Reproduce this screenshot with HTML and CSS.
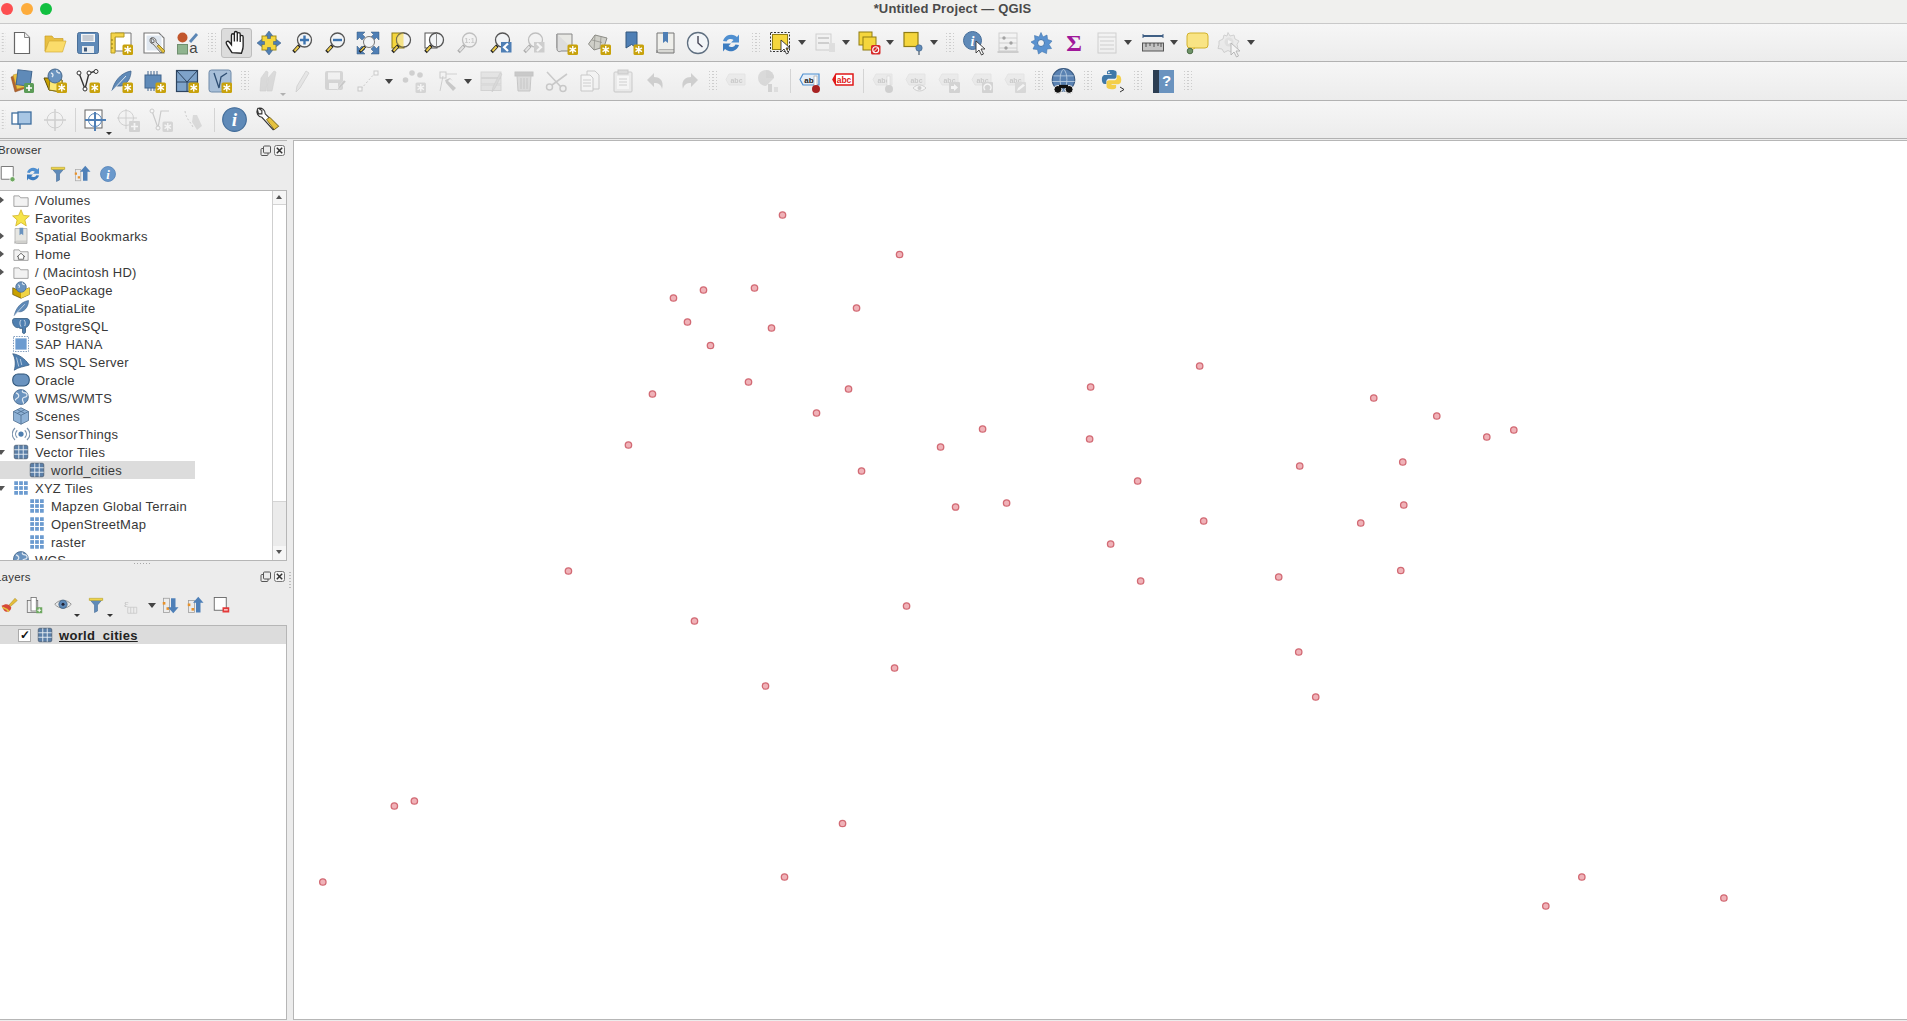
FILE: index.html
```html
<!DOCTYPE html>
<html lang="en">
<head>
<meta charset="utf-8">
<title>*Untitled Project — QGIS</title>
<link rel="stylesheet" href="styles.css">
</head>
<body>
<svg class="defs" aria-hidden="true">
<defs>
<g id="bd"><rect x="13.5" y="13.5" width="10.5" height="10.5" rx="1.5" fill="#c8a20c"/><path d="M18.75 15v7.5M15.5 16.9l6.5 3.7M22 16.9l-6.5 3.7" stroke="#fff" stroke-width="1.4"/></g>
<g id="mag"><path d="M9.5 14.5 3.5 21" stroke="#222" stroke-width="3.4"/><path d="M8.5 15.5 4.5 20" stroke="#e8c84a" stroke-width="2"/><circle cx="14.5" cy="9" r="7" fill="#f2f4f6" stroke="#555" stroke-width="1.3"/></g>
<g id="cur"><path d="M0 0v12l3-3 2.5 5 2-1-2.5-5h4z" fill="#fff" stroke="#333" stroke-width=".9"/></g>
<g id="grid"><rect x="3" y="3" width="18" height="18" rx="2" fill="#5b7fa8" stroke="#44566b"/><path d="M9 3v18M15 3v18M3 9h18M3 15h18" stroke="#e8eef4" stroke-width="1.2"/></g>
<g id="gridl" fill="#6b9bd0"><rect x="3" y="3" width="5" height="5"/><rect x="9.5" y="3" width="5" height="5"/><rect x="16" y="3" width="5" height="5"/><rect x="3" y="9.5" width="5" height="5"/><rect x="9.5" y="9.5" width="5" height="5"/><rect x="16" y="9.5" width="5" height="5"/><rect x="3" y="16" width="5" height="5"/><rect x="9.5" y="16" width="5" height="5"/><rect x="16" y="16" width="5" height="5"/></g>
<g id="fold"><path d="M2.5 6.500h7l2 2.500h10v11.500h-19z" fill="#f2f2f2" stroke="#8a8a8a" stroke-width="1"/></g>
<g id="globe"><circle cx="12" cy="11" r="9" fill="#6a93bf" stroke="#47688c"/><path d="M6 6c3 1 4 3 3 5s-3 1-4 4M14 3c-1 2 1 3 3 3s3 2 2 4-4 0-5 3 2 4 1 6" fill="none" stroke="#dfe8f1" stroke-width="1.5"/></g>
<g id="feath"><path d="M3 22C5 13 11 4 22 2c0 6-3 13-10 15l-5 0z" fill="#5f8ab8" stroke="#40658e" stroke-width=".8"/><path d="M3 22 17 7" stroke="#dfe8f1"/></g>
<g id="refr"><path d="M4 10a8.500 8.500 0 0 1 14-4l2-2.500v8h-8l2.500-2.500a4.500 4.500 0 0 0-7 1.500z" fill="#4f8fd0"/><path d="M20 14a8.500 8.500 0 0 1-14 4l-2 2.500v-8h8l-2.500 2.500a4.500 4.500 0 0 0 7-1.500z" fill="#3c7cc0"/></g>
<g id="tag"><path d="M5 5h16v11H5l-3-5.500z" fill="#dcdcd2" stroke="#c8c8bc"/><text x="12.500" y="13.500" class="st">abc</text></g>
<g id="funnel"><path d="M3 4h18l-7 8v8l-4 2V12z" fill="#5f8ab8" stroke="#456d99" stroke-width=".8"/><path d="M3 3h18v3H3z" fill="#f0d44a" stroke="#b89f20" stroke-width=".6"/></g>
<g id="dfloat"><rect x="1" y="3.500" width="7" height="7" rx="1" fill="none" stroke="#555"/><rect x="3.500" y="1" width="7" height="7" rx="1" fill="#ececec" stroke="#555"/></g>
<g id="dclose"><rect x=".5" y=".5" width="10" height="10" rx="2" fill="#f4f4f4" stroke="#777"/><path d="m2.800 2.800 5.400 5.400M8.200 2.800 2.800 8.200" stroke="#333" stroke-width="1.500"/></g>
</defs>
</svg>

<header class="title">
  <div class="lights"><span class="l red"></span><span class="l org"></span><span class="l grn"></span></div>
  <div class="title-text">*Untitled Project — QGIS</div>
</header>

<div class="tb">
  <span class="grip g1"></span>
  <span class="b"><svg class="i" viewBox="0 0 24 24"><path d="M4.500 1.500h10l5 5v16h-15z" fill="#fff" stroke="#666" stroke-width="1.200"/><path d="M14.500 1.500v5h5" fill="#eee" stroke="#888"/></svg></span>
  <span class="b"><svg class="i" viewBox="0 0 24 24"><path d="M2 20V5h7l2 2.500h9V11H6z" fill="#e8bf40" stroke="#c89e28" stroke-width=".7"/><path d="M2 21 6 10h17l-3.500 11z" fill="#fbdc6a" stroke="#d4ae38" stroke-width=".7"/></svg></span>
  <span class="b"><svg class="i" viewBox="0 0 24 24"><rect x="1.500" y="1.500" width="21" height="21" rx="2" fill="#5f8ab8" stroke="#4a6f98"/><rect x="5" y="3" width="14" height="8" fill="#f3f5f7"/><path d="M6.500 5h11M6.500 7h11M6.500 9h11" stroke="#7d8c9c" stroke-width=".8"/><rect x="6" y="15" width="12" height="7" fill="#e8ecef"/><rect x="8" y="16.500" width="3" height="4" fill="#40597a"/></svg></span>
  <span class="b"><svg class="i" viewBox="0 0 24 24"><path d="M6 2h16v18H6z" fill="#fff" stroke="#777"/><path d="M2 2h13v4H6v16H2z" fill="#f4d44a" stroke="#b59a20"/><path d="M2 9h2M2 13h2M2 17h2" stroke="#8c7714"/><use href="#bd"/></svg></span>
  <span class="b"><svg class="i" viewBox="0 0 24 24"><path d="M2 2h15l5 5v15H2z" fill="#fff" stroke="#777" stroke-width="1.100"/><rect x="4.500" y="4.500" width="15" height="15" fill="#dfe7f0"/><path d="M9 7a3.500 3.500 0 0 0 2 6l8 9 3-3-8-8a3.500 3.500 0 0 0-5-4l3 2v2.500H9.500z" fill="#ddd" stroke="#555" stroke-width=".8"/><path d="m15 15 6 7 2-2-6-6z" fill="#e5c23f" stroke="#8b7614" stroke-width=".7"/></svg></span>
  <span class="b"><svg class="i" viewBox="0 0 24 24"><circle cx="7.500" cy="6.500" r="5" fill="#c2562c"/><path d="m15 11 7-8" stroke="#5b86b5" stroke-width="2.800"/><rect x="2.500" y="13.500" width="10" height="9.500" fill="#8fb48f" stroke="#6f8f6f"/><text x="18.500" y="22" class="a">a</text></svg></span>
  <span class="grip g16"></span>
  <span class="b on"><svg class="i big" viewBox="0 0 24 24"><path d="M8 21C6 18 4 15 3 13c-.8-1.800 1.500-3 2.800-1.200L7.500 14V5.500a1.300 1.300 0 0 1 2.600 0V11 3.500a1.300 1.300 0 0 1 2.600 0V11 4.500a1.300 1.300 0 0 1 2.600 0V11.500 7a1.300 1.300 0 0 1 2.600 0v8c0 3-1 4.500-1.500 6.500z" fill="#fff" stroke="#222" stroke-width="1.200"/></svg></span>
  <span class="b"><svg class="i" viewBox="0 0 24 24"><rect x="5" y="5" width="14" height="14" fill="#f5d63d" stroke="#a48d18"/><path d="M12 0l3.500 4.500h-2v3h-3v-3h-2zM12 24l3.500-4.500h-2v-3h-3v3h-2zM0 12l4.500-3.500v2h3v3h-3v2zM24 12l-4.500-3.500v2h-3v3h3v2z" fill="#4f7fb5" stroke="#34597f" stroke-width=".5"/></svg></span>
  <span class="b"><svg class="i" viewBox="0 0 24 24"><use href="#mag"/><path d="M14.500 4.500v9M10 9h9" stroke="#3d74b0" stroke-width="2.400"/></svg></span>
  <span class="b"><svg class="i" viewBox="0 0 24 24"><use href="#mag"/><path d="M10 9h9" stroke="#3d74b0" stroke-width="2.400"/></svg></span>
  <span class="b"><svg class="i" viewBox="0 0 24 24"><path d="M1 1h8L6.500 3.500 9 6 6 9 3.500 6.500 1 9zM23 1h-8l2.500 2.500L15 6l3 3 2.500-2.500L23 9zM23 23h-8l2.500-2.500L15 18l3-3 2.500 2.500L23 15zM1 23h8l-2.500-2.500L9 18l-3-3-2.500 2.500L1 15z" fill="#4f7fb5" stroke="#34597f" stroke-width=".5"/><path d="M9.500 15 3.500 21" stroke="#222" stroke-width="2.600"/><path d="M8.500 16 4.500 20" stroke="#e8c84a" stroke-width="1.400"/><circle cx="13" cy="11" r="5.500" fill="#f2f4f6" stroke="#777"/></svg></span>
  <span class="b"><svg class="i" viewBox="0 0 24 24"><rect x="3" y="2" width="12" height="15" fill="#f5d63d" stroke="#8f7c14"/><use href="#mag" /><path d="M14.500 2a7 7 0 0 0 0 14z" fill="#f5d63d" opacity=".6"/></svg></span>
  <span class="b"><svg class="i" viewBox="0 0 24 24"><rect x="3" y="2" width="12" height="15" fill="#fff" stroke="#555"/><use href="#mag"/><path d="M14.500 2v14" stroke="#888"/></svg></span>
  <span class="b off"><svg class="i" viewBox="0 0 24 24"><use href="#mag"/><text x="14.500" y="12" class="st">1:1</text></svg></span>
  <span class="b"><svg class="i" viewBox="0 0 24 24"><use href="#mag"/><rect x="13" y="11" width="10.500" height="10.500" fill="#4f7fb5"/><path d="m20 12.500-4 3.700 4 3.800" fill="none" stroke="#fff" stroke-width="2.200"/></svg></span>
  <span class="b off"><svg class="i" viewBox="0 0 24 24"><use href="#mag"/><rect x="13" y="11" width="10.500" height="10.500" fill="#888"/><path d="m16 12.500 4 3.700-4 3.800" fill="none" stroke="#fff" stroke-width="2.200"/></svg></span>
  <span class="b"><svg class="i" viewBox="0 0 24 24"><path d="M3 3h15v14H3z" fill="#e8e8e4" stroke="#888"/><path d="M3 3v15c0 3 3 3 4 2h11v-3" fill="#ddd" stroke="#888"/><use href="#bd"/></svg></span>
  <span class="b"><svg class="i" viewBox="0 0 24 24"><path d="M1.500 13 8 4l12 3-3 9-10 3z" fill="#cfcfc8" stroke="#8c8c86"/><path d="M5 9l10 2.500M8 4l-1 15M14 6l-1 11" stroke="#8c8c86" stroke-width=".7"/><use href="#bd"/></svg></span>
  <span class="b"><svg class="i" viewBox="0 0 24 24"><path d="M6 1h11v16l-5.500-3.500L6 17z" fill="#4f7fb5" stroke="#34597f"/><use href="#bd"/></svg></span>
  <span class="b"><svg class="i" viewBox="0 0 24 24"><path d="M4 2h17v17H7c-2 0-3 1-3 3z" fill="#efefeb" stroke="#777"/><path d="M4 19c0 2 1 3 3 3h14v-3" fill="#d8d8d4" stroke="#777"/><path d="M10 1h5v11l-2.500-2-2.500 2z" fill="#4f7fb5"/></svg></span>
  <span class="b"><svg class="i" viewBox="0 0 24 24"><circle cx="12" cy="12" r="10.500" fill="#f2f5f8" stroke="#5f6f80" stroke-width="1.300"/><path d="M12 5v7l4.500 4" fill="none" stroke="#445" stroke-width="1.400"/></svg></span>
  <span class="b"><svg class="i" viewBox="0 0 24 24"><use href="#refr"/></svg></span>
  <span class="grip g17"></span>
  <span class="b"><svg class="i" viewBox="0 0 24 24"><rect x="1.500" y="1.500" width="19" height="19" fill="none" stroke="#333" stroke-dasharray="2 1.500"/><rect x="3.500" y="3.500" width="15" height="15" fill="#f5d63d" stroke="#8f7c14"/><use href="#cur" x="12" y="9"/></svg></span><span class="ar"></span>
  <span class="b off"><svg class="i" viewBox="0 0 24 24"><rect x="3" y="3" width="15" height="16" fill="#f0f0ea" stroke="#888"/><path d="M5 7h11M5 12h11" stroke="#888" stroke-width="2"/><rect x="16" y="12" width="6" height="9" fill="#bbb"/></svg></span><span class="ar"></span>
  <span class="b"><svg class="i" viewBox="0 0 24 24"><rect x="2" y="1" width="13" height="13" fill="#f5d63d" stroke="#8f7c14"/><rect x="6" y="6" width="13" height="13" fill="#f5d63d" stroke="#8f7c14"/><rect x="14" y="14" width="9.500" height="9.500" rx="1.500" fill="#d62828"/><circle cx="18.750" cy="18.750" r="3" fill="none" stroke="#fff" stroke-width="1.100"/><path d="m16.500 21 4.500-4.500" stroke="#fff"/></svg></span><span class="ar"></span>
  <span class="b"><svg class="i" viewBox="0 0 24 24"><rect x="3" y="1.500" width="14" height="14" fill="#f5d63d" stroke="#8f7c14" stroke-width="1.200"/><circle cx="18" cy="17" r="3.200" fill="#5f8ab8" stroke="#3f6084" stroke-width=".6"/><path d="M18 20v4" stroke="#5f6f80" stroke-width="1.400"/></svg></span><span class="ar"></span>
  <span class="grip g18"></span>
  <span class="b"><svg class="i" viewBox="0 0 24 24"><circle cx="9.500" cy="9.500" r="9" fill="#5f8ab8" stroke="#456d99"/><text x="9.500" y="14.500" class="inf">i</text><use href="#cur" x="13" y="10"/></svg></span>
  <span class="b off"><svg class="i" viewBox="0 0 24 24"><rect x="3" y="2" width="18" height="18" fill="none" stroke="#888"/><path d="M3 7h18M3 12h18M3 17h18" stroke="#888"/><circle cx="8" cy="7" r="1.700"/><circle cx="15" cy="12" r="1.700"/><circle cx="10" cy="17" r="1.700"/><rect x="1.500" y="20" width="21" height="2" fill="#888"/></svg></span>
  <span class="b"><svg class="i" viewBox="0 0 24 24"><path d="M12 1.500 14 6l4-2 .5 4.500L23 10l-3 3.500 2.500 4-4.500.5-.5 4.500-4.500-2-3.500 2.500-1-4.500-4.500-.5L6 14 2 11l4-2-.5-4.500L10 6z" fill="#5a92d0" stroke="#3f74ad" stroke-width=".6"/><circle cx="12" cy="12" r="3.500" fill="#f0f0f0" stroke="#3f74ad"/></svg></span>
  <span class="b"><svg class="i" viewBox="0 0 24 24"><text x="12" y="20" class="sig">Σ</text></svg></span>
  <span class="b off"><svg class="i" viewBox="0 0 24 24"><rect x="3" y="2" width="18" height="20" fill="#f2f2ec" stroke="#888"/><path d="M3 6h18M5 10h14M5 14h14M5 18h14" stroke="#888"/></svg></span><span class="ar w"></span>
  <span class="b"><svg class="i" viewBox="0 0 24 24"><path d="M2 5h20" stroke="#3f5f84" stroke-width="2"/><path d="M2 3v4M22 3v4" stroke="#3f5f84"/><rect x="1.500" y="12" width="21" height="8" fill="#c4c4c4" stroke="#555"/><path d="M5 12v4M9 12v3M13 12v4M17 12v3M20 12v4" stroke="#333" stroke-width=".8"/></svg></span><span class="ar"></span>
  <span class="b"><svg class="i" viewBox="0 0 24 24"><rect x="2" y="2" width="21" height="15" rx="3" fill="#f9e484" stroke="#d2b22c"/><path d="M5 17v3l5-3" fill="#f9e484" stroke="#d2b22c"/><circle cx="5" cy="20" r="2.800" fill="#6f9468" stroke="#4d6d48"/></svg></span>
  <span class="b off"><svg class="i" viewBox="0 0 24 24"><path d="M10 1.500 12 5l4-1 1 4 4 2-2 3.500 1 4-4 .5-2 3.500-4-2-4 2-2-3.500-4-.5 1-4L1 10l4-2 1-4 3 1z" fill="#ddd" stroke="#888"/><circle cx="11" cy="11" r="4.500" fill="#bbb"/><path d="m10 9 4 2-4 2z" fill="#fff"/><use href="#cur" x="13" y="12"/></svg></span><span class="ar"></span>
</div>

<div class="tb t2">
  <span class="grip g1"></span>
  <span class="b"><svg class="i" viewBox="0 0 24 24"><path d="M1 8l11-4 4 15-11 4z" fill="#b4642c" stroke="#8a4a1e" stroke-width=".5"/><path d="M3 6l11-3 4 14-11 3z" fill="#edc23e" stroke="#b3922c" stroke-width=".5"/><rect x="7" y="1.500" width="14" height="15" transform="rotate(7 14 9)" fill="#5f8ab8" stroke="#40658e"/><rect x="14" y="14" width="10" height="10" rx="1.500" fill="#5c9c58"/><path d="M19 16v6M16 19h6" stroke="#fff" stroke-width="1.700"/></svg></span>
  <span class="b"><svg class="i" viewBox="0 0 24 24"><path d="M1 9l5 12 13 2V11L7 9z" fill="#c9a100" stroke="#5a4d10"/><path d="M7 9l12 2v12L6 21z" fill="#fbe878" stroke="#8c7714"/><circle cx="12" cy="7" r="7" fill="#6a93bf" stroke="#47688c"/><path d="M8 4c3 1 2 3 1 4m5-7c-1 2 1 3 3 3" stroke="#dfe8f1" fill="none" stroke-width="1.400"/><use href="#bd"/></svg></span>
  <span class="b"><svg class="i" viewBox="0 0 24 24"><path d="M3 4l6 16 4-16 7-2" fill="none" stroke="#333" stroke-width="1.400"/><circle cx="3" cy="4" r="2" fill="#fff" stroke="#333"/><circle cx="9" cy="20" r="2" fill="#fff" stroke="#333"/><circle cx="13" cy="4" r="2" fill="#fff" stroke="#333"/><circle cx="20" cy="2.500" r="2" fill="#fff" stroke="#333"/><use href="#bd"/></svg></span>
  <span class="b"><svg class="i" viewBox="0 0 24 24"><use href="#feath"/><use href="#bd"/></svg></span>
  <span class="b"><svg class="i" viewBox="0 0 24 24"><rect x="3" y="6" width="16" height="13" fill="#5f8ab8" stroke="#40658e"/><path d="M6 2v4M9 2v4M12 2v4M15 2v4M6 19v3M9 19v3M12 19v3" stroke="#40658e"/><use href="#bd"/></svg></span>
  <span class="b"><svg class="i" viewBox="0 0 24 24"><rect x="1.500" y="1.500" width="21" height="21" fill="#7ea3ca" stroke="#2d4460" stroke-width="1.200"/><path d="M1.500 13h21M12 13v10M1.500 1.500 12 13l10.500-11.500" stroke="#2d4460" fill="none"/><use href="#bd"/></svg></span>
  <span class="b"><svg class="i" viewBox="0 0 24 24"><rect x="1" y="1" width="22" height="22" rx="2.500" fill="#a8bfd8" stroke="#6f8aa8"/><path d="M6 4l5 15 2-11 6-4" fill="none" stroke="#2f4f73" stroke-width="1.300"/><use href="#bd"/></svg></span>
  <span class="grip g16"></span>
  <span class="b off sm-a"><svg class="i" viewBox="0 0 24 24"><path d="M3 22 4 9l5-7 2 1-2 19zM10 22l1-13 6-7 2 1-4 19z" fill="#aaa" stroke="#888" stroke-width=".6"/></svg></span>
  <span class="b off"><svg class="i" viewBox="0 0 24 24"><path d="M6 23l1-6L16 2l3 2-9 15z" fill="#ccc" stroke="#888" stroke-width=".8"/></svg></span>
  <span class="b off"><svg class="i" viewBox="0 0 24 24"><rect x="2" y="2" width="18" height="19" rx="2" fill="#999"/><rect x="5" y="3.500" width="12" height="7" fill="#eee"/><rect x="6" y="14" width="9" height="6" fill="#eee"/><path d="M14 22l2-5 5-6 2 1.500-5 6z" fill="#777" stroke="#fff" stroke-width=".4"/></svg></span>
  <span class="b off"><svg class="i" viewBox="0 0 24 24"><path d="M5 20 19 4" stroke="#777" stroke-dasharray="2 2"/><rect x="2" y="18" width="4" height="4" fill="#fff" stroke="#777"/><rect x="18" y="2" width="4" height="4" fill="#fff" stroke="#777"/></svg></span><span class="ar w"></span>
  <span class="b off"><svg class="i" viewBox="0 0 24 24"><circle cx="3.500" cy="11" r="2.800" fill="#888"/><circle cx="10" cy="4" r="2.800" fill="#888"/><circle cx="18" cy="6" r="2.800" fill="#888"/><use href="#bd"/></svg></span>
  <span class="b off"><svg class="i" viewBox="0 0 24 24"><path d="M5 22 8 7" stroke="#888"/><rect x="5" y="3" width="6" height="6" fill="none" stroke="#777"/><path d="M11 5h11" stroke="#888"/><path d="m11 14 7 8 3-3-8-7 2-2 3 2-3-3-5 2z" fill="#777"/></svg></span><span class="ar"></span>
  <span class="b off"><svg class="i" viewBox="0 0 24 24"><rect x="2" y="3" width="20" height="5.500" fill="#c8c8b0" stroke="#999"/><rect x="2" y="9.500" width="20" height="5.500" fill="#c8c8b0" stroke="#999"/><rect x="2" y="16" width="20" height="5.500" fill="#c8c8b0" stroke="#999"/><path d="m13 23 1-5 7-14 2 1-7 14z" fill="#aaa" stroke="#777" stroke-width=".5"/></svg></span>
  <span class="b off"><svg class="i" viewBox="0 0 24 24"><rect x="3" y="3" width="18" height="4" fill="#a66" stroke="#955"/><path d="M5 7h14l-1 15H6z" fill="#c9a8a8" stroke="#966"/><path d="M9 9v11M12 9v11M15 9v11" stroke="#966"/></svg></span>
  <span class="b off"><svg class="i" viewBox="0 0 24 24"><path d="M2 3l14 15M22 5 7 16" stroke="#777" stroke-width="1.600"/><circle cx="18" cy="19.500" r="3" fill="none" stroke="#777" stroke-width="1.500"/><circle cx="4.500" cy="18" r="3" fill="none" stroke="#777" stroke-width="1.500"/></svg></span>
  <span class="b off"><svg class="i" viewBox="0 0 24 24"><path d="M9 2h8l4 4v14H9z" fill="#f6f6f6" stroke="#777"/><path d="M3 6h9l3 3v13H3z" fill="#fff" stroke="#777"/><path d="M5 11h8M5 14h8M5 17h8" stroke="#888"/></svg></span>
  <span class="b off"><svg class="i" viewBox="0 0 24 24"><rect x="3" y="3" width="18" height="20" rx="1" fill="#ddd" stroke="#777"/><rect x="7" y="1" width="10" height="4" fill="#aaa" stroke="#777"/><rect x="6" y="7" width="12" height="13" fill="#fff"/><path d="M8 10h8M8 13h8M8 16h8" stroke="#888"/></svg></span>
  <span class="b off"><svg class="i" viewBox="0 0 24 24"><path d="M10 4 3 11l7 7v-4c4 0 7 1 8 6 2-7-1-12-8-12z" fill="#888"/></svg></span>
  <span class="b off"><svg class="i" viewBox="0 0 24 24"><path d="m14 4 7 7-7 7v-4c-4 0-7 1-8 6-2-7 1-12 8-12z" fill="#888"/></svg></span>
  <span class="grip g14"></span>
  <span class="b off"><svg class="i" viewBox="0 0 24 24"><use href="#tag"/></svg></span>
  <span class="b off"><svg class="i" viewBox="0 0 24 24"><path d="M9 1a8 8 0 0 1 8 8l-8 8A8 8 0 0 1 9 1z" fill="#c8a09a"/><path d="M9 1a8 8 0 0 1 8 8H9z" fill="#8ca08c"/><rect x="11" y="15" width="4" height="8" fill="#999"/><rect x="17" y="18" width="4" height="5" fill="#bbb"/></svg></span>
  <span class="vl v8"></span>
  <span class="b"><svg class="i" viewBox="0 0 24 24"><path d="M5 5h16v11H5l-3-5.500z" fill="#e4eef8" stroke="#4f8fd0" stroke-width="1.200"/><text x="11" y="13.500" class="lb">ab</text><rect x="16" y="7" width="3" height="11" fill="#fff" stroke="#888" stroke-width=".5"/><circle cx="18" cy="20" r="4" fill="#a82222"/></svg></span>
  <span class="b"><svg class="i" viewBox="0 0 24 24"><path d="M5 5h17v11H5l-3-5.500z" fill="#fff" stroke="#e01818" stroke-width="1.500"/><path d="M2 10.500 5 5v11z" fill="#e01818"/><text x="13" y="13.500" class="lr">abc</text></svg></span>
  <span class="vl v7"></span>
  <span class="b off"><svg class="i" viewBox="0 0 24 24"><use href="#tag"/><rect x="16" y="7" width="3" height="11" fill="#fff" stroke="#888" stroke-width=".5"/><circle cx="18" cy="20" r="4" fill="#aa8a88"/></svg></span>
  <span class="b off"><svg class="i" viewBox="0 0 24 24"><use href="#tag"/><path d="M9 19c4-4 9-4 13 0-4 4-9 4-13 0z" fill="#fff" stroke="#888"/><circle cx="15.500" cy="19" r="2" fill="#888"/></svg></span>
  <span class="b off"><svg class="i" viewBox="0 0 24 24"><use href="#tag"/><rect x="12" y="13" width="11" height="11" rx="1" fill="#999"/><path d="M14 17h3v-2l4 3.500-4 3.500v-2h-3z" fill="#fff"/></svg></span>
  <span class="b off"><svg class="i" viewBox="0 0 24 24"><use href="#tag"/><rect x="12" y="13" width="11" height="11" rx="1" fill="#999"/><path d="M15 21a3.500 3.500 0 1 1 5 0" fill="none" stroke="#fff" stroke-width="1.500"/></svg></span>
  <span class="b off"><svg class="i" viewBox="0 0 24 24"><use href="#tag"/><rect x="12" y="13" width="11" height="11" rx="1" fill="#aaa"/><path d="m14 22 1-3 5-4 2 1.500-5 4z" fill="#fff"/></svg></span>
  <span class="grip g15"></span>
  <span class="b"><svg class="i big" viewBox="0 0 24 24"><circle cx="12" cy="10.500" r="10" fill="#5a82b2" stroke="#3a5a80"/><path d="M3 7h18M2 12h20M12 1c-4 3-4 15 0 20M12 1c4 3 4 15 0 20" stroke="#b6cbe0" fill="none" stroke-width=".8"/><circle cx="7" cy="19" r="3.500" fill="#111" stroke="#fff" stroke-width=".8"/><circle cx="17" cy="19" r="3.500" fill="#111" stroke="#fff" stroke-width=".8"/><rect x="8" y="15" width="8" height="3" fill="#111"/></svg></span>
  <span class="grip g17"></span>
  <span class="b"><svg class="i" viewBox="0 0 24 24"><g transform="scale(.88)"><path d="M11.900 1C6.500 1 6.800 3.400 6.800 3.400v2.500H12v.8H4.700S1 6.200 1 11.700s3.200 5.300 3.200 5.300h1.900v-2.600s-.1-3.200 3.200-3.200h5.400s3 0 3-3V4s.5-3-5.800-3z" fill="#3f78a8"/><path d="M12.100 23c5.400 0 5.100-2.400 5.100-2.400v-2.500H12v-.8h7.300s3.700.5 3.700-5-3.200-5.300-3.200-5.300h-1.900v2.600s.1 3.200-3.200 3.200H9.300s-3 0-3 3V20s-.5 3 5.800 3z" fill="#f3cf4a"/><circle cx="9" cy="3.800" r="1" fill="#fff"/></g><path d="m19 18 4 2.500-4 2.500" fill="none" stroke="#333"/></svg></span>
  <span class="grip g17"></span>
  <span class="b"><svg class="i" viewBox="0 0 24 24"><rect x="2" y="1" width="21" height="23" fill="#6a93bf"/><rect x="2" y="1" width="6" height="23" fill="#2c3e52"/><text x="15.500" y="17" class="q">?</text></svg></span>
  <span class="grip g17"></span>
</div>

<div class="tb t3">
  <span class="grip g1"></span>
  <span class="b"><svg class="i" viewBox="0 0 24 24"><rect x="2" y="5" width="7" height="11" fill="#fff" stroke="#3f6f9f" stroke-width="1.300"/><rect x="8" y="4" width="13" height="12" fill="#a8c6e4" stroke="#3f6f9f" stroke-width="1.300"/><path d="M10 16v5" stroke="#3f6f9f" stroke-width="1.300"/></svg></span>
  <span class="b off"><svg class="i" viewBox="0 0 24 24"><circle cx="12" cy="12" r="8" fill="none" stroke="#888"/><path d="M12 1v22M1 12h22" stroke="#888" stroke-width="1.500"/></svg></span>
  <span class="vl v7"></span>
  <span class="b sm-a"><svg class="i" viewBox="0 0 24 24"><rect x="2" y="2" width="17" height="18" fill="#fff" stroke="#666"/><circle cx="12" cy="12" r="6.500" fill="none" stroke="#4f7fb5"/><path d="M12 4v19M2 12h21" stroke="#4f7fb5" stroke-width="2"/></svg></span>
  <span class="b off"><svg class="i" viewBox="0 0 24 24"><circle cx="10" cy="10" r="7.500" fill="none" stroke="#888"/><path d="M10 1v20M1 10h20" stroke="#888"/><rect x="13" y="13" width="11" height="11" rx="1" fill="#999"/><path d="M18.500 15v7M15 18.500h7" stroke="#fff" stroke-width="1.700"/></svg></span>
  <span class="b off"><svg class="i" viewBox="0 0 24 24"><path d="M3 3l6 17 3-17 8 0" fill="none" stroke="#777" stroke-width="1.200"/><circle cx="3" cy="3" r="2" fill="#fff" stroke="#777"/><circle cx="9" cy="20" r="2" fill="#fff" stroke="#777"/><use href="#bd"/></svg></span>
  <span class="b off"><svg class="i" viewBox="0 0 24 24"><path d="M3 3c1 8 5 10 8 16" fill="none" stroke="#777" stroke-dasharray="2 2"/><path d="m11 7 4 0 5 11-5 4-5-8z" fill="#aaa"/></svg></span>
  <span class="vl v7"></span>
  <span class="b"><svg class="i big" viewBox="0 0 24 24"><circle cx="12" cy="12" r="10.500" fill="#5f8ab8" stroke="#3f6a98"/><text x="12" y="18" class="inf l">i</text></svg></span>
  <span class="b"><svg class="i big" viewBox="0 0 24 24"><path d="M3 3a5 5 0 0 0 4 7l10 11 4-3L10 7a5 5 0 0 0-6-5l3 2v3H4z" fill="#fff" stroke="#333" stroke-width="1"/><path d="m11 12 7 9 4-3-8-8z" fill="#e5c23f" stroke="#665510" stroke-width=".7"/></svg></span>
</div>

<main class="main">
  <aside class="dock">
    <section class="panel p-browser">
      <div class="phead"><span class="ptitle">Browser</span><span class="btns"><svg class="db" viewBox="0 0 11 11"><use href="#dfloat"/></svg><svg class="db" viewBox="0 0 11 11"><use href="#dclose"/></svg></span></div>
      <div class="ptools">
        <span class="pb"><svg class="ps" viewBox="0 0 24 24"><path d="M3 2h16v17H3z" fill="#fff" stroke="#777" stroke-width="1.300"/><circle cx="18" cy="19" r="3.500" fill="#6ea860" stroke="#fff"/></svg></span>
        <span class="pb"><svg class="ps" viewBox="0 0 24 24"><use href="#refr"/></svg></span>
        <span class="pb"><svg class="ps" viewBox="0 0 24 24"><use href="#funnel"/></svg></span>
        <span class="pb"><svg class="ps" viewBox="0 0 24 24"><rect x="2" y="6" width="7" height="15" fill="none" stroke="#aaa"/><rect x="1" y="10" width="3" height="3" fill="#e8912a"/><rect x="5" y="15" width="3" height="3" fill="#e8912a"/><path d="M15 1 8 9h4v12h6V9h4z" fill="#4f80b8"/></svg></span>
        <span class="pb"><svg class="ps" viewBox="0 0 24 24"><circle cx="12" cy="12" r="10" fill="#6a99cc" stroke="#4f7fb5"/><text x="12" y="18" class="inf l">i</text></svg></span>
      </div>
      <div class="tree-wrap">
        <div class="tree">
          <div class="row"><span class="tw r"></span><svg class="ti" viewBox="0 0 24 24"><use href="#fold"/></svg><span class="tx">/Volumes</span></div>
          <div class="row"><span class="tw"></span><svg class="ti" viewBox="0 0 24 24"><path d="m12 1 3.200 7.500 8 .7-6 5.300 1.800 8L12 18l-7 4.500 1.800-8-6-5.300 8-.7z" fill="#f6e44a" stroke="#d0b020"/></svg><span class="tx">Favorites</span></div>
          <div class="row"><span class="tw r"></span><svg class="ti" viewBox="0 0 24 24"><path d="M4 2h16v17H7c-2 0-3 1-3 3z" fill="#e6e6e2" stroke="#aaa"/><path d="M4 19c0 2 1 3 3 3h13v-3" fill="#d0d0cc" stroke="#aaa"/><path d="M10 1h5v10l-2.500-2-2.500 2z" fill="#6a93bf"/></svg><span class="tx">Spatial Bookmarks</span></div>
          <div class="row"><span class="tw r"></span><svg class="ti" viewBox="0 0 24 24"><use href="#fold"/><path d="m12 11-5 4.500h1.500V19h7v-3.500H17z" fill="#fff" stroke="#444"/></svg><span class="tx">Home</span></div>
          <div class="row"><span class="tw r"></span><svg class="ti" viewBox="0 0 24 24"><use href="#fold"/></svg><span class="tx">/ (Macintosh HD)</span></div>
          <div class="row"><span class="tw"></span><svg class="ti" viewBox="0 0 24 24"><path d="M1 9l11 5 11-5v9l-11 5-11-5z" fill="#c9a100" stroke="#665510"/><path d="M12 14v9l11-5V9z" fill="#f0d445"/><circle cx="12" cy="8" r="7" fill="#6a93bf" stroke="#47688c"/><path d="M8 5c3 1 2 3 1 4m5-7c-1 2 1 3 3 3" stroke="#dfe8f1" fill="none" stroke-width="1.400"/></svg><span class="tx">GeoPackage</span></div>
          <div class="row"><span class="tw"></span><svg class="ti" viewBox="0 0 24 24"><use href="#feath"/></svg><span class="tx">SpatiaLite</span></div>
          <div class="row"><span class="tw"></span><svg class="ti" viewBox="0 0 24 24"><path d="M3 2h17c3 0 4 4 3 7-1 4-4 5-5 5v6c0 2-3 3-4 1v-6c-2 1-4 0-5-1-4 1-7-2-8-6C0 5 1 2 3 2z" fill="#4f7fb0" stroke="#2f5579"/><path d="M12 4c-2 2-2 6 0 9M16 4c2 2 2 5 1 8" stroke="#fff" fill="none" stroke-width=".9"/></svg><span class="tx">PostgreSQL</span></div>
          <div class="row"><span class="tw"></span><svg class="ti" viewBox="0 0 24 24"><rect x="2" y="2" width="20" height="20" fill="none" stroke="#5a7ea8" stroke-dasharray="2 1.500"/><rect x="4.500" y="4.500" width="15" height="15" fill="#6b9bd0"/></svg><span class="tx">SAP HANA</span></div>
          <div class="row"><span class="tw"></span><svg class="ti" viewBox="0 0 24 24"><path d="M1 1c8 1 16 6 22 15-7 2-15 3-20 7 2-7 2-15-2-22z" fill="#4f7fb0" stroke="#345a80"/><path d="M6 6l3 12M11 8l2 8" stroke="#cfdcea"/></svg><span class="tx">MS SQL Server</span></div>
          <div class="row"><span class="tw"></span><svg class="ti" viewBox="0 0 24 24"><rect x="1" y="4" width="22" height="16" rx="7" fill="#6a93bf" stroke="#2f5579" stroke-width="1.400"/></svg><span class="tx">Oracle</span></div>
          <div class="row"><span class="tw"></span><svg class="ti" viewBox="0 0 24 24"><use href="#globe" transform="translate(-1.300 -1.400) scale(1.100)"/></svg><span class="tx">WMS/WMTS</span></div>
          <div class="row"><span class="tw"></span><svg class="ti" viewBox="0 0 24 24"><path d="M12 1 22 6v12l-10 5-10-5V6z" fill="#8fb2d6" stroke="#48698c"/><path d="M2 6l10 5 10-5M12 11v12M7 3.500 17 8.500M17 3.500 7 8.500" fill="none" stroke="#48698c"/></svg><span class="tx">Scenes</span></div>
          <div class="row"><span class="tw"></span><svg class="ti" viewBox="0 0 24 24"><circle cx="12" cy="12" r="3.500" fill="#4f7fb0"/><path d="M7 7c-3 3-3 7 0 10M17 7c3 3 3 7 0 10M4 4c-5 5-5 11 0 16M20 4c5 5 5 11 0 16" fill="none" stroke="#7b93ad" stroke-width="1.500"/></svg><span class="tx">SensorThings</span></div>
          <div class="row"><span class="tw d"></span><svg class="ti" viewBox="0 0 24 24"><use href="#grid"/></svg><span class="tx">Vector Tiles</span></div>
          <div class="row ch sel"><svg class="ti" viewBox="0 0 24 24"><use href="#grid"/></svg><span class="tx">world_cities</span></div>
          <div class="row"><span class="tw d"></span><svg class="ti" viewBox="0 0 24 24"><use href="#gridl"/></svg><span class="tx">XYZ Tiles</span></div>
          <div class="row ch"><svg class="ti" viewBox="0 0 24 24"><use href="#gridl"/></svg><span class="tx">Mapzen Global Terrain</span></div>
          <div class="row ch"><svg class="ti" viewBox="0 0 24 24"><use href="#gridl"/></svg><span class="tx">OpenStreetMap</span></div>
          <div class="row ch"><svg class="ti" viewBox="0 0 24 24"><use href="#gridl"/></svg><span class="tx">raster</span></div>
          <div class="row"><span class="tw"></span><svg class="ti" viewBox="0 0 24 24"><use href="#globe" transform="translate(-1.300 -1.400) scale(1.100)"/></svg><span class="tx">WCS</span></div>
        </div>
        <div class="sbar"><span class="sb up"></span><span class="strack"></span><span class="sthumb"></span><span class="sb dn"></span></div>
      </div>
    </section>
    <div class="split"></div>
    <section class="panel p-layers">
      <div class="phead h2"><span class="ptitle">Layers</span><span class="btns"><svg class="db" viewBox="0 0 11 11"><use href="#dfloat"/></svg><svg class="db" viewBox="0 0 11 11"><use href="#dclose"/></svg></span></div>
      <div class="ptools lt">
        <span class="pb"><svg class="ps" viewBox="0 0 24 24"><path d="m12 12 8-9 3 3-9 8z" fill="#e5bd3a" stroke="#9c811c" stroke-width=".6"/><path d="M2 13c4-2 7-3 10-1l3 3c0 4-3 6-7 6-3-1-4-4-6-8z" fill="#d6493a"/><path d="M3 15c3 1 7 3 9 6" stroke="#e5c23f" stroke-width="2" fill="none"/></svg></span>
        <span class="pb"><svg class="ps" viewBox="0 0 24 24"><rect x="3" y="6" width="14" height="16" fill="#eee" stroke="#666"/><rect x="8" y="2" width="7" height="18" fill="#fff" stroke="#666"/><rect x="15" y="15" width="8" height="8" fill="#6ea860"/><path d="M19 16.500v5M16.500 19h5" stroke="#fff" stroke-width="1.300"/></svg></span>
        <span class="pb w33 sm-a"><svg class="ps" viewBox="0 0 24 24"><path d="M1 11c6-7 16-7 22 0-6 7-16 7-22 0z" fill="#e8e8e8" stroke="#777"/><circle cx="12" cy="11" r="5.500" fill="#5f8ab8" stroke="#34597f"/><circle cx="12" cy="11" r="2" fill="#223"/></svg></span>
        <span class="pb w33 sm-a"><svg class="ps" viewBox="0 0 24 24"><use href="#funnel"/></svg></span>
        <span class="pb w35 off"><svg class="ps" viewBox="0 0 24 24"><text x="7" y="14" class="eps">ε</text><path d="M9 15h12v8H9z" fill="none" stroke="#777"/><path d="M13 15v8M17 15v8" stroke="#777"/></svg></span>
        <span class="ar pa"></span>
        <span class="pb"><svg class="ps" viewBox="0 0 24 24"><rect x="2" y="3" width="8" height="19" fill="none" stroke="#999"/><rect x="1" y="8" width="3.500" height="3.500" fill="#e8912a"/><rect x="6" y="15" width="3.500" height="3.500" fill="#e8912a"/><path d="M15 23 8 15h4V3h6v12h4z" fill="#4f80b8"/></svg></span>
        <span class="pb"><svg class="ps" viewBox="0 0 24 24"><rect x="2" y="6" width="8" height="16" fill="none" stroke="#999"/><rect x="1" y="10" width="3.500" height="3.500" fill="#e8912a"/><rect x="6" y="16" width="3.500" height="3.500" fill="#e8912a"/><path d="M15 1 8 9h4v13h6V9h4z" fill="#4f80b8"/></svg></span>
        <span class="pb"><svg class="ps" viewBox="0 0 24 24"><rect x="3" y="2" width="16" height="17" fill="#fff" stroke="#666" stroke-width="1.200"/><rect x="14" y="15" width="9" height="7" fill="#e43a3a"/><path d="M16 18.500h5" stroke="#fff" stroke-width="1.500"/></svg></span>
      </div>
      <div class="ltree">
        <div class="lrow"><span class="chk">✓</span><svg class="ti" viewBox="0 0 24 24"><use href="#grid"/></svg><span class="lname">world_cities</span></div>
      </div>
    </section>
  </aside>
  <div class="vgrip"></div>
  <section class="canvas">
    <svg class="map" viewBox="294 141 1613 878" preserveAspectRatio="xMinYMin meet">
      <g class="pts" transform="translate(.2 0) scale(1.0004 1)">
        <circle cx="782" cy="215" r="3"/><circle cx="899" cy="254.500" r="3"/><circle cx="673" cy="298" r="3"/><circle cx="703" cy="290" r="3"/><circle cx="754" cy="288" r="3"/><circle cx="856" cy="308" r="3"/><circle cx="687" cy="322" r="3"/><circle cx="771" cy="328" r="3"/><circle cx="710" cy="345.500" r="3"/><circle cx="652" cy="394" r="3"/><circle cx="748" cy="382" r="3"/><circle cx="848" cy="389" r="3"/><circle cx="816" cy="413" r="3"/><circle cx="628" cy="445" r="3"/><circle cx="861" cy="471" r="3"/><circle cx="940" cy="447" r="3"/><circle cx="982" cy="429" r="3"/><circle cx="1090" cy="387" r="3"/><circle cx="1199" cy="366" r="3"/><circle cx="1089" cy="439" r="3"/><circle cx="955" cy="507" r="3"/><circle cx="1006" cy="503" r="3"/><circle cx="1137" cy="481" r="3"/><circle cx="1203" cy="521" r="3"/><circle cx="1110" cy="544" r="3"/><circle cx="1140" cy="581" r="3"/><circle cx="1299" cy="466" r="3"/><circle cx="1373" cy="398" r="3"/><circle cx="1436" cy="416" r="3"/><circle cx="1486" cy="437" r="3"/><circle cx="1513" cy="430" r="3"/><circle cx="1402" cy="462" r="3"/><circle cx="1403" cy="505" r="3"/><circle cx="1360" cy="523" r="3"/><circle cx="1400" cy="570.500" r="3"/><circle cx="1278" cy="577" r="3"/><circle cx="1298" cy="652" r="3"/><circle cx="1315" cy="697" r="3"/><circle cx="568" cy="571" r="3"/><circle cx="694" cy="621" r="3"/><circle cx="906" cy="606" r="3"/><circle cx="894" cy="668" r="3"/><circle cx="765" cy="686" r="3"/><circle cx="414" cy="801" r="3"/><circle cx="394" cy="806" r="3"/><circle cx="842" cy="823.500" r="3"/><circle cx="322.500" cy="882" r="3"/><circle cx="784" cy="877" r="3"/><circle cx="1545" cy="906" r="3"/><circle cx="1581" cy="877" r="3"/><circle cx="1723" cy="898" r="3"/>
      </g>
    </svg>
  </section>
</main>
</body>
</html>
```

FILE: styles.css
```css
* { box-sizing: border-box; }
html, body { margin: 0; height: 100%; }
body {
  width: 1907px;
  height: 1021px;
  overflow: hidden;
  background: #ececec;
  font-family: "Liberation Sans", Arial, sans-serif;
  font-size: 13px;
  color: #333;
  display: flex;
  flex-direction: column;
}
.defs { display: none; }

/* title bar */
.title {
  height: 24px;
  flex: none;
  background: #f0f0ee;
  border-bottom: 1px solid #c9c9c9;
  display: flex;
  align-items: center;
  justify-content: center;
  position: relative;
}
.title-text { font-weight: 700; font-size: 13px; letter-spacing: .16px; color: #4a4a4a; margin-top: -6px; margin-left: -2px; }
.lights { position: absolute; left: 1px; top: 3px; display: flex; gap: 7.500px; }
.l { width: 12px; height: 12px; border-radius: 50%; }
.red { background: #fd4f50; }
.org { background: #fdac3b; }
.grn { background: #12c040; }

/* toolbars */
.tb {
  height: 38px;
  flex: none;
  display: flex;
  align-items: center;
  background: linear-gradient(#f6f6f6, #ececec);
  border-bottom: 1px solid #b2b2b2;
}
.t2 { height: 39px; }
.t3 { height: 38px; }
.b { width: 33px; height: 30px; flex: none; display: flex; align-items: center; justify-content: center; position: relative; }
.i { width: 24px; height: 24px; display: block; overflow: visible; }
.i.big { width: 27px; height: 27px; }
.on { width: 31px; margin: 0 1px; background: #dcdcdc; border: 1px solid #bdbdbd; border-radius: 3px; }
.off { filter: grayscale(1); opacity: .32; }
.ar { width: 11px; height: 5px; flex: none; position: relative; }
.ar.w { width: 13px; }
.ar::before {
  content: "";
  position: absolute;
  left: 0;
  top: 0;
  border-left: 4.500px solid transparent;
  border-right: 4.500px solid transparent;
  border-top: 5px solid #444;
}
.sm-a::after {
  content: "";
  position: absolute;
  right: 0;
  bottom: 0;
  border-left: 3px solid transparent;
  border-right: 3px solid transparent;
  border-top: 3px solid #333;
}
.grip {
  flex: none;
  height: 22px;
  background: radial-gradient(circle, #cdcdcd 0.7px, transparent 1px) 50% 0 / 4px 3px repeat;
}
.g1 { width: 5.500px; }
.g14 { width: 14px; background-clip: content-box; padding: 0 3px; }
.g15 { width: 15px; background-clip: content-box; padding: 0 3.500px; }
.g16 { width: 16px; background-clip: content-box; padding: 0 4px; }
.g17 { width: 17px; background-clip: content-box; padding: 0 4.500px; }
.g18 { width: 18px; background-clip: content-box; padding: 0 5px; }
.vl { flex: none; height: 24px; position: relative; }
.vl::before { content: ""; position: absolute; left: 50%; top: 0; bottom: 0; width: 1px; background: #d4d4d4; }
.v8 { width: 8px; }
.v7 { width: 7px; }

/* main */
.main { flex: 1; display: flex; min-height: 0; padding-bottom: 1px; padding-top: 1px; position: relative; }
.dock { width: 287px; flex: none; display: flex; flex-direction: column; border-top: 1px solid #b6b6b6; }
.vgrip {
  position: absolute;
  left: 289px;
  top: 432px;
  width: 2px;
  height: 18px;
  background: radial-gradient(circle, #bcbcbc .8px, transparent 1px) 0 0 / 2px 3px;
}
.panel { display: flex; flex-direction: column; min-height: 0; }
.p-browser { height: 420px; flex: none; }
.p-layers { flex: 1; }
.phead { height: 18px; margin-bottom: 2px; flex: none; display: flex; align-items: center; justify-content: space-between; padding-right: 2px; }
.h2 { height: 21px; margin-bottom: 1px; }
.ptitle { font-size: 11.500px; color: #333; margin-left: -2px; letter-spacing: .2px; }
.h2 .ptitle { margin-left: -5px; margin-top: 1px; }
.btns { display: flex; gap: 3px; }
.db { width: 11px; height: 11px; display: block; }
.ptools { height: 25px; margin-bottom: 4px; flex: none; display: flex; align-items: center; margin-left: -4.500px; }
.pb { width: 25px; height: 24px; flex: none; display: flex; align-items: center; justify-content: center; position: relative; }
.ps { width: 18px; height: 18px; display: block; }
.w33 { width: 33px; }
.w35 { width: 35px; }
.ar.pa { width: 11px; }
.lt { margin-left: -3.500px; height: 30px; margin-top: 2px; margin-bottom: 5px; }
.split { height: 5px; flex: none; position: relative; }
.split::before {
  content: "";
  position: absolute;
  left: 133px;
  top: 2px;
  width: 17px;
  height: 1px;
  background: radial-gradient(circle, #a8a8a8 .6px, transparent .8px) 0 0 / 3px 1px;
}

.tree-wrap { flex: 1; min-height: 0; display: flex; background: #fff; border: 1px solid #b6b6b6; border-left: 0; }
.tree { flex: 1; overflow: hidden; min-width: 0; }
.row { height: 18px; display: flex; align-items: center; white-space: nowrap; }
.row.ch { padding-left: 28px; }
.row.sel { background: #dcdcdc; width: 195px; }
.tw { width: 12px; flex: none; position: relative; height: 18px; }
.tw.r::before {
  content: "";
  position: absolute;
  left: 0;
  top: 5px;
  border-top: 4px solid transparent;
  border-bottom: 4px solid transparent;
  border-left: 5px solid #555;
  margin-left: -1px;
}
.tw.d::before {
  content: "";
  position: absolute;
  left: -3px;
  top: 7px;
  border-left: 4px solid transparent;
  border-right: 4px solid transparent;
  border-top: 5px solid #555;
}
.ti { width: 18px; height: 18px; flex: none; display: block; }
.tx { margin-left: 5px; font-size: 13px; letter-spacing: .26px; color: #383838; }

.sbar { width: 14px; flex: none; border-left: 1px solid #cfcfcf; display: flex; flex-direction: column; }
.sb { height: 14px; flex: none; position: relative; background: #f6f6f6; }
.sb.up { border-bottom: 1px solid #d4d4d4; }
.sb.up::before, .sb.dn::before { content: ""; position: absolute; left: 3px; top: 4px; border-left: 3.500px solid transparent; border-right: 3.500px solid transparent; }
.sb.up::before { border-bottom: 4px solid #555; }
.sb.dn::before { border-top: 4px solid #555; }
.strack { flex: 1; background: #fff; }
.sthumb { height: 45px; flex: none; background: #ebebeb; border-top: 1px solid #d4d4d4; }

.ltree { flex: 1; background: #fff; border: 1px solid #b6b6b6; border-left: 0; }
.lrow { height: 18px; background: #dcdcdc; display: flex; align-items: center; padding-left: 18px; }
.chk {
  width: 13px;
  height: 13px;
  flex: none;
  background: #fff;
  border: 1px solid #aaa;
  font-size: 12px;
  line-height: 11px;
  text-align: center;
  color: #111;
  font-weight: 700;
  margin-right: 5px;
}
.lname { font-weight: 700; text-decoration: underline; font-size: 13px; letter-spacing: .3px; color: #222; margin-left: 5px; }

/* map */
.canvas { position: relative; flex: 1; margin-left: 6px; background: #fff; border: 1px solid #b6b6b6; border-right: 0; min-width: 0; }
.map { display: block; width: 100%; height: 100%; }
.pts circle { r: 3.200px; fill: #f0b2b8; stroke: #d26a74; stroke-width: 1.300; }

/* svg labels */
.a { font: 15px "Liberation Sans", sans-serif; fill: #444; text-anchor: middle; }
.st { font: 700 7px "Liberation Sans", sans-serif; fill: #777; text-anchor: middle; }
.lb { font: 700 8px "Liberation Sans", sans-serif; fill: #222; text-anchor: middle; }
.lr { font: 700 8.500px "Liberation Sans", sans-serif; fill: #e01818; text-anchor: middle; }
.inf { font: italic 700 14px "Liberation Serif", serif; fill: #fff; text-anchor: middle; }
.inf.l { font-size: 17px; }
.sig { font: 700 24px "Liberation Serif", serif; fill: #a0189a; text-anchor: middle; }
.q { font: 700 15px "Liberation Sans", sans-serif; fill: #fff; text-anchor: middle; }
.eps { font: 15px "Liberation Serif", serif; fill: #666; text-anchor: middle; }
```
